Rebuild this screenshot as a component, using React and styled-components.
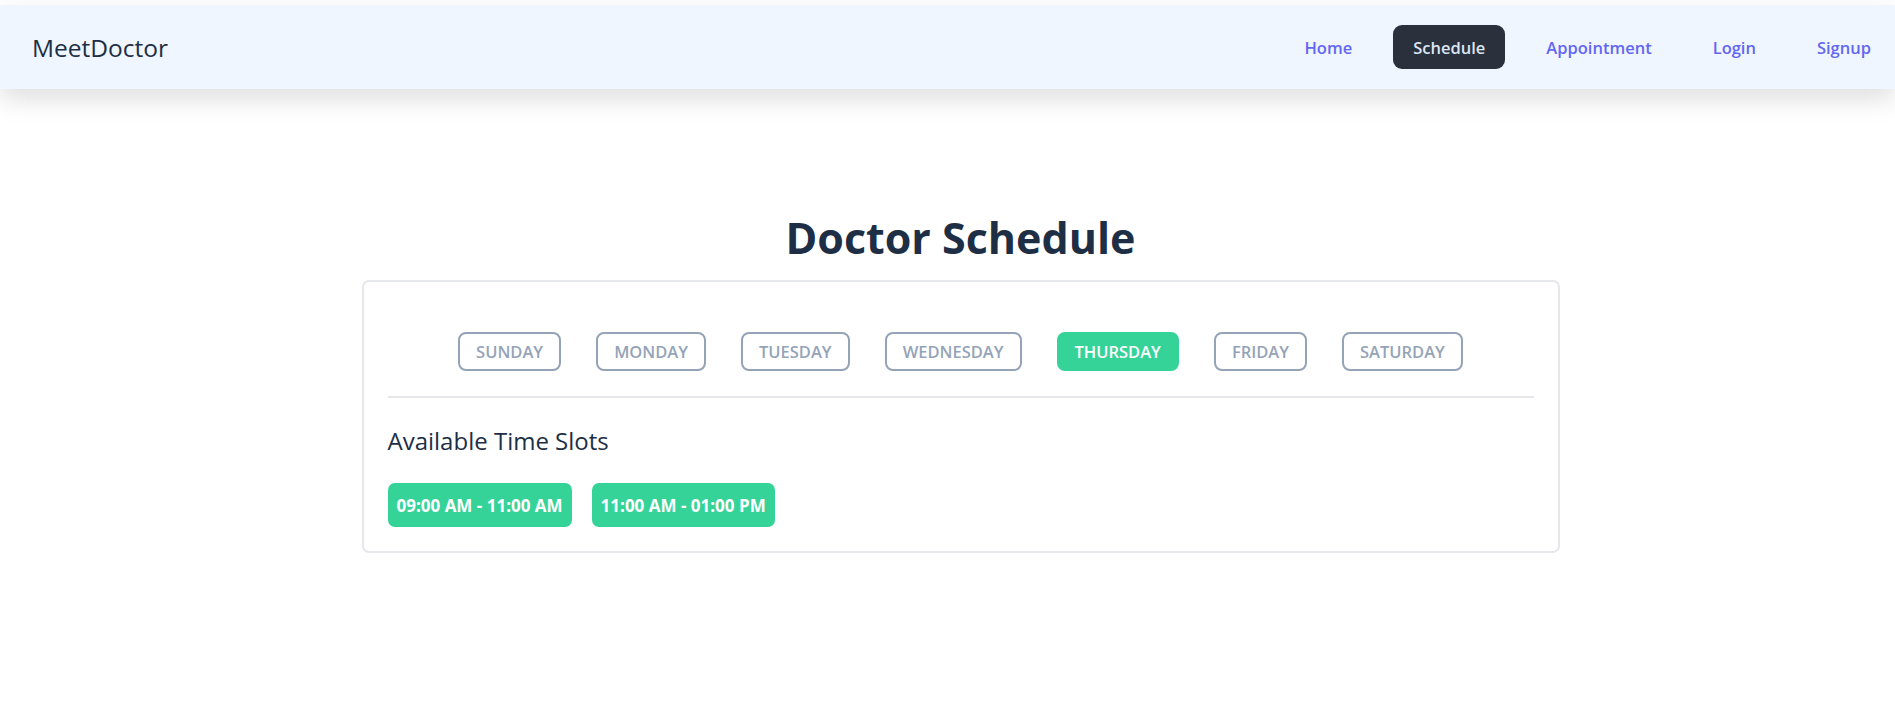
import React, { useState } from "react";
import styled, { createGlobalStyle } from "styled-components";

const GlobalStyle = createGlobalStyle`
  * { box-sizing: border-box; }
  body {
    margin: 0;
    background: #ffffff;
    font-family: "Open Sans", "Noto Sans", sans-serif;
    color: #1e2f45;
  }
`;

const Page = styled.div`
  padding-top: 5px;
  min-height: 100vh;
`;

/* Navbar */
const Nav = styled.nav`
  height: 84px;
  display: flex;
  align-items: center;
  justify-content: space-between;
  padding: 0 4px 0 32px;
  background: #eff6ff;
  box-shadow: 0 10px 24px rgba(0, 0, 0, 0.13);
`;

const Logo = styled.a`
  font-size: 24.5px;
  font-weight: 500;
  color: #1e2f45;
  text-decoration: none;
`;

const NavLinks = styled.ul`
  display: flex;
  align-items: center;
  gap: 21px;
  margin: 0;
  padding: 0;
  list-style: none;
`;

const NavLink = styled.a`
  display: flex;
  align-items: center;
  height: 44px;
  padding: 0 20px;
  border-radius: 9px;
  font-size: 16.5px;
  font-weight: 600;
  text-decoration: none;
  color: ${(p) => (p.$active ? "#dbe6f5" : "#6366f1")};
  background: ${(p) => (p.$active ? "#2a303c" : "transparent")};
`;

/* Main */
const Main = styled.main`
  display: flex;
  flex-direction: column;
  align-items: center;
  padding: 0 0 0 26px;
`;

const Title = styled.h1`
  margin: 123px 0 16px;
  font-size: 43px;
  font-weight: 700;
  line-height: 52px;
  color: #1e2f45;
`;

const Card = styled.section`
  width: 1198px;
  padding: 24px;
  border: 2px solid #e5e7eb;
  border-radius: 7px;
  background: #fff;
`;

const DayRow = styled.div`
  display: flex;
  justify-content: center;
  gap: 35px;
  margin-top: 26px;
  padding-bottom: 25px;
  border-bottom: 2px solid #e5e7eb;
`;

const DayButton = styled.button`
  height: 39px;
  padding: 0 16px;
  border: 2px solid ${(p) => (p.$active ? "#36d399" : "#94a3b8")};
  border-radius: 8px;
  background: ${(p) => (p.$active ? "#36d399" : "transparent")};
  color: ${(p) => (p.$active ? "#ffffff" : "#94a3b8")};
  font-family: inherit;
  font-size: 16.5px;
  font-weight: 600;
  text-transform: uppercase;
  cursor: pointer;
`;

const SlotHeading = styled.h2`
  margin: 27px 0 0;
  font-size: 24px;
  font-weight: 500;
  line-height: 32px;
  color: #1e2f45;
`;

const SlotList = styled.div`
  display: flex;
  gap: 20px;
  margin-top: 26px;
`;

const Slot = styled.div`
  display: flex;
  align-items: center;
  height: 44px;
  padding: 0 9px;
  border-radius: 7px;
  background: #36d399;
  color: #ffffff;
  font-size: 17px;
  font-weight: 700;
`;

const days = [
  "Sunday",
  "Monday",
  "Tuesday",
  "Wednesday",
  "Thursday",
  "Friday",
  "Saturday",
];

const links = ["Home", "Schedule", "Appointment", "Login", "Signup"];

const slots = ["09:00 AM - 11:00 AM", "11:00 AM - 01:00 PM"];

export default function App() {
  const [day, setDay] = useState("Thursday");

  return (
    <Page>
      <GlobalStyle />
      <Nav>
        <Logo href="#">MeetDoctor</Logo>
        <NavLinks>
          {links.map((l) => (
            <li key={l}>
              <NavLink href="#" $active={l === "Schedule"}>
                {l}
              </NavLink>
            </li>
          ))}
        </NavLinks>
      </Nav>

      <Main>
        <Title>Doctor Schedule</Title>
        <Card>
          <DayRow>
            {days.map((d) => (
              <DayButton key={d} $active={d === day} onClick={() => setDay(d)}>
                {d}
              </DayButton>
            ))}
          </DayRow>

          <SlotHeading>Available Time Slots</SlotHeading>
          <SlotList>
            {slots.map((s) => (
              <Slot key={s}>{s}</Slot>
            ))}
          </SlotList>
        </Card>
      </Main>
    </Page>
  );
}
